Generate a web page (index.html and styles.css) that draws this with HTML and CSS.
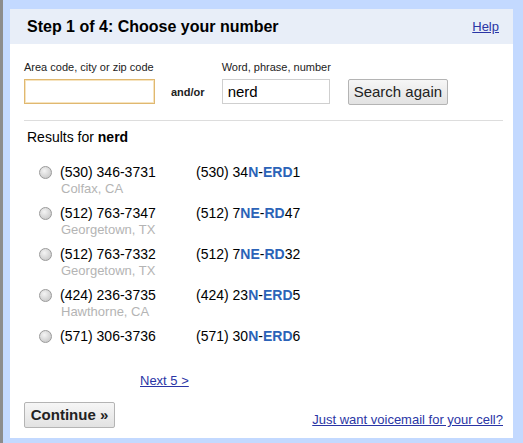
FILE: index.html
```html
<!DOCTYPE html>
<html>
<head>
<meta charset="utf-8">
<link rel="stylesheet" href="styles.css">
</head>
<body>
<div class="frame">
  <div class="panel">
    <div class="header">
      <h1 class="title">Step 1 of 4: Choose your number</h1>
      <a class="link help" href="#">Help</a>
    </div>
    <div class="content">
      <div class="search">
        <div class="field">
          <label class="label">Area code, city or zip code</label>
          <div class="input input-area"></div>
        </div>
        <div class="andor">and/or</div>
        <div class="field">
          <label class="label">Word, phrase, number</label>
          <div class="input input-word">nerd</div>
        </div>
        <div class="btn btn-search">Search again</div>
      </div>
      <div class="divider"></div>
      <div class="results-title">Results for <b>nerd</b></div>
      <div class="results">
        <div class="row">
          <span class="radio"></span>
          <div class="num">
            <div class="digits">(530) 346-3731</div>
            <div class="loc">Colfax, CA</div>
          </div>
          <div class="word">(530) 34<b>N</b>-<b>ERD</b>1</div>
        </div>
        <div class="row">
          <span class="radio"></span>
          <div class="num">
            <div class="digits">(512) 763-7347</div>
            <div class="loc">Georgetown, TX</div>
          </div>
          <div class="word">(512) 7<b>NE</b>-<b>RD</b>47</div>
        </div>
        <div class="row">
          <span class="radio"></span>
          <div class="num">
            <div class="digits">(512) 763-7332</div>
            <div class="loc">Georgetown, TX</div>
          </div>
          <div class="word">(512) 7<b>NE</b>-<b>RD</b>32</div>
        </div>
        <div class="row">
          <span class="radio"></span>
          <div class="num">
            <div class="digits">(424) 236-3735</div>
            <div class="loc">Hawthorne, CA</div>
          </div>
          <div class="word">(424) 23<b>N</b>-<b>ERD</b>5</div>
        </div>
        <div class="row">
          <span class="radio"></span>
          <div class="num">
            <div class="digits">(571) 306-3736</div>
          </div>
          <div class="word">(571) 30<b>N</b>-<b>ERD</b>6</div>
        </div>
      </div>
      <div class="next"><a class="link" href="#">Next 5 &gt;</a></div>
      <div class="footer">
        <div class="btn btn-continue">Continue »</div>
        <a class="link voicemail" href="#">Just want voicemail for your cell?</a>
      </div>
    </div>
  </div>
</div>
</body>
</html>
```

FILE: styles.css
```css
html, body {
  margin: 0;
  padding: 0;
}
body {
  width: 523px;
  height: 443px;
  overflow: hidden;
  font-family: "Liberation Sans", Arial, sans-serif;
  color: #000;
  background: #c3d9ff;
}
.frame {
  box-sizing: border-box;
  width: 523px;
  height: 443px;
  border-left: 3px solid #8c8c8c;
  padding: 9px 10px 5px 7px;
  background: #c3d9ff;
}
.panel {
  background: #fff;
  height: 429px;
  display: flex;
  flex-direction: column;
}
.header {
  height: 35px;
  background: #e8eef8;
  display: flex;
  align-items: center;
  justify-content: space-between;
  padding: 0 14px 0 17px;
}
.title {
  margin: 0;
  font-size: 16px;
  font-weight: bold;
  line-height: 20px;
  padding-top: 1px;
}
.link {
  color: #2a35a5;
  text-decoration: underline;
  font-size: 13px;
}
.help {
  line-height: 16px;
}
.content {
  padding: 16px 10px 0 14px;
  display: flex;
  flex-direction: column;
  flex: 1;
}
.search {
  display: flex;
  align-items: flex-end;
}
.field {
  display: flex;
  flex-direction: column;
}
.label {
  font-size: 11px;
  line-height: 14px;
  color: #222;
  margin-bottom: 5px;
}
.input {
  box-sizing: border-box;
  height: 25px;
  background: #fff;
  font-size: 15px;
  line-height: 23px;
  padding-left: 5px;
}
.input-area {
  width: 131px;
  border: 1px solid #e0b870;
  box-shadow: inset 0 0 0 1px #f6e4c0;
}
.input-word {
  width: 108px;
  border: 1px solid #cfcfcf;
}
.andor {
  font-size: 11px;
  font-weight: bold;
  color: #222;
  height: 25px;
  line-height: 27px;
  margin: 0 17px 0 16px;
}
.btn {
  box-sizing: border-box;
  border: 1px solid #b4b4b4;
  border-radius: 2px;
  background: linear-gradient(#f6f6f6, #e2e2e2);
  color: #222;
  text-align: center;
}
.btn-search {
  width: 100px;
  height: 26px;
  font-size: 15px;
  line-height: 24px;
  margin-left: 17px;
  margin-bottom: -1px;
}
.divider {
  height: 1px;
  background: #dddddd;
  margin: 16px 0 0 0;
}
.results-title {
  font-size: 14px;
  line-height: 17px;
  margin: 8px 0 0 3px;
}
.results {
  margin-top: 17px;
  display: flex;
  flex-direction: column;
  gap: 7px;
}
.row {
  display: flex;
  align-items: flex-start;
}
.radio {
  box-sizing: border-box;
  width: 13px;
  height: 13px;
  border-radius: 50%;
  border: 1px solid #9a9a9a;
  background: radial-gradient(circle at 40% 35%, #f4f4f4, #cfcfcf 70%);
  margin: 3px 8px 0 15px;
  flex: none;
}
.num {
  width: 136px;
}
.digits, .word {
  font-size: 14px;
  line-height: 18px;
}
.loc {
  font-size: 13px;
  line-height: 16px;
  color: #b4b4b4;
  padding-left: 1px;
}
.word b {
  color: #2b63b8;
}
.next {
  margin: 27px 0 0 116px;
  line-height: 16px;
}
.footer {
  margin-top: 13px;
  display: flex;
  justify-content: space-between;
  align-items: flex-end;
}
.btn-continue {
  width: 91px;
  height: 26px;
  font-size: 15px;
  font-weight: bold;
  line-height: 24px;
}
.voicemail {
  line-height: 16px;
  margin-bottom: 0;
}
```
